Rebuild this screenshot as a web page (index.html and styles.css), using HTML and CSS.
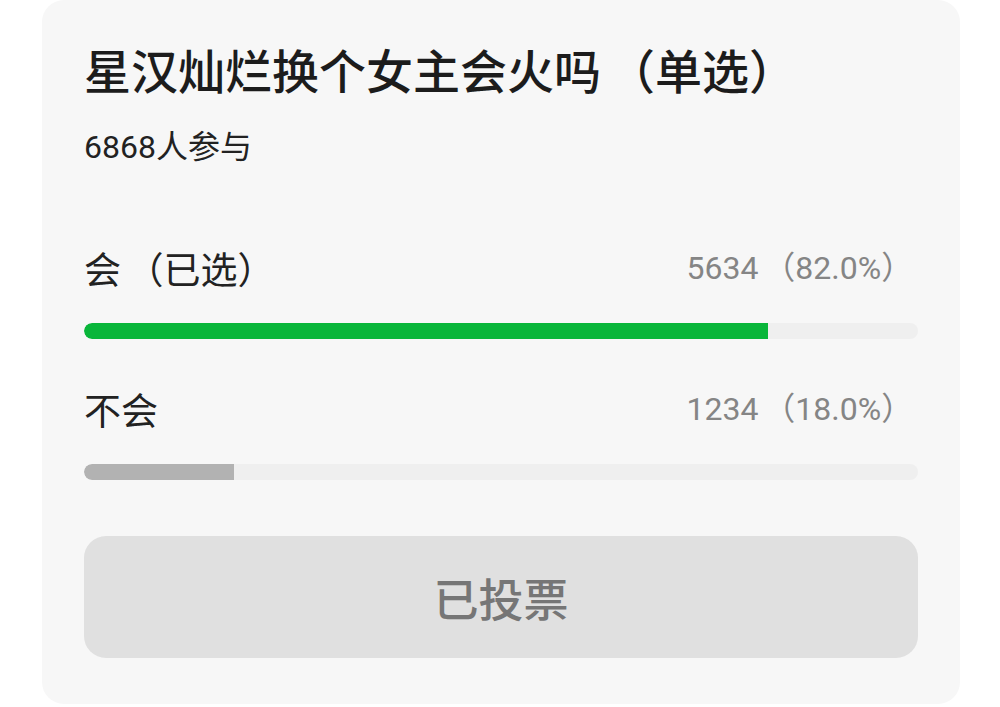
FILE: index.html
```html
<!DOCTYPE html>
<html>
  <head>
    <meta charset="utf-8">
    <link rel="stylesheet" href="styles.css">
  </head>
  <body>
    <div class="vote-card">
      <div class="vote-title">星汉灿烂换个女主会火吗<span class="open">（</span>单选<span class="close">）</span></div>
      <div class="vote-count">6868人参与</div>

      <div class="option">
        <div class="option-row">
          <span class="option-name">会<span class="open">（</span>已选<span class="close">）</span></span>
          <span class="option-num">5634<span class="open">（</span>82.0%<span class="close">）</span></span>
        </div>
        <div class="track"><div class="fill chosen" style="width: 82%"></div></div>
      </div>

      <div class="option">
        <div class="option-row">
          <span class="option-name">不会</span>
          <span class="option-num">1234<span class="open">（</span>18.0%<span class="close">）</span></span>
        </div>
        <div class="track"><div class="fill" style="width: 18%"></div></div>
      </div>

      <div class="voted-button">已投票</div>
    </div>
  </body>
</html>
```

FILE: styles.css
```css
body {
  margin: 0;
  background: #fff;
  font-family: Roboto, "Noto Sans CJK SC", sans-serif;
}

/* brackets get the wide spacing of the phone font */
.open {
  margin-left: 0.15em;
}

.vote-card {
  margin-left: 42px;
  width: 918px;
  box-sizing: border-box;
  padding: 38px 42px 46px 42px;
  background: #f7f7f7;
  border-radius: 22px;
}

.vote-title {
  font-family: "Noto Sans CJK SC", sans-serif;
  font-size: 47px;
  font-weight: 500;
  line-height: 62px;
  color: #1c1c1c;
}

.vote-count {
  margin-top: 27px;
  font-size: 32px;
  line-height: 40px;
  color: #222;
}

.option {
  margin-top: 46px;
}

.vote-count + .option {
  margin-top: 77px;
}

.option-row {
  display: flex;
  justify-content: space-between;
  align-items: center;
  line-height: 48px;
}

.option-name {
  font-family: "Noto Sans CJK SC", sans-serif;
  font-size: 37px;
  color: #222;
}

.option-num {
  font-size: 32px;
  color: #858585;
}

.option-num .close {
  margin-right: 0.15em;
}

.track {
  margin-top: 31px;
  height: 16px;
  border-radius: 8px;
  background: #efefef;
  overflow: hidden;
}

.fill {
  height: 100%;
  border-radius: 8px 0 0 8px;
  background: #b2b2b2;
}

.fill.chosen {
  background: #09b63a;
}

.voted-button {
  margin-top: 56px;
  height: 122px;
  border-radius: 22px;
  background: #e0e0e0;
  display: flex;
  align-items: center;
  justify-content: center;
  font-family: "Noto Sans CJK SC", sans-serif;
  font-size: 45px;
  font-weight: 500;
  color: #767676;
}
```
